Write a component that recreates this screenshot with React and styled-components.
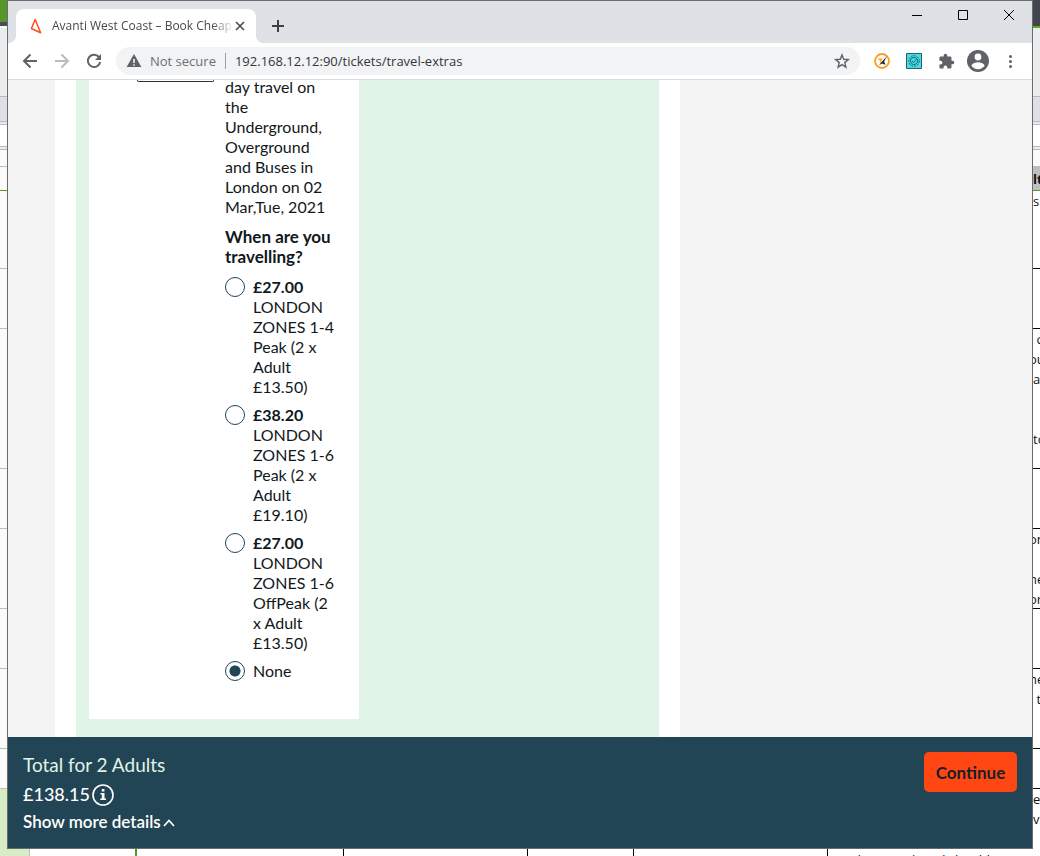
import React, { useState } from "react";
import styled, { createGlobalStyle } from "styled-components";

const Global = createGlobalStyle`
  *, *::before, *::after { box-sizing: border-box; }
  body { margin: 0; background: #fff; color: #111820; }
  button, input { font: inherit; color: inherit; }
  button { border: 0; padding: 0; background: none; cursor: pointer; }
  p, h1, h2, fieldset { margin: 0; }
`;

const ui = `"Open Sans", "Noto Sans", sans-serif`;
const brand = `Lato, "Liberation Sans", sans-serif`;

/* Spreadsheet behind the browser window */
const Desktop = styled.div`
  display: grid;
  grid-template-columns: 7px minmax(0, 1fr) 7px;
  grid-template-rows: minmax(0, 1fr) 7px;
  height: 100vh;
  min-height: 480px;
  overflow: hidden;
`;
const Sheet = styled.div`
  overflow: hidden;
  min-height: 0;
`;
const Band = styled.div`
  height: ${(p) => p.$h}px;
  background: ${(p) => p.$bg || "transparent"};
  border-bottom: ${(p) => (p.$line ? `1px solid ${p.$line}` : "0")};
  padding-top: ${(p) => p.$top || 0}px;
  overflow: hidden;
`;
const CellText = styled.div`
  font: ${(p) => (p.$bold ? 700 : 400)} 13px/20px ${ui};
  height: 20px;
  color: #111;
  white-space: pre;
  text-indent: ${(p) => (p.$cut ? "-4px" : "0")};
`;
const BottomStrip = styled.div`
  grid-column: 1 / -1;
  display: flex;
  overflow: hidden;
`;
const BottomCell = styled.div`
  flex: ${(p) => (p.$w ? `0 0 ${p.$w}px` : "1 1 0")};
  background: ${(p) => p.$bg || "#fff"};
  border-right: ${(p) => p.$line || "0"};
  font: 400 13px/20px ${ui};
  color: #111;
  padding: 1px 0 0 3px;
  white-space: nowrap;
  overflow: hidden;
`;

/* Browser window */
const Window = styled.div`
  display: flex;
  flex-direction: column;
  min-width: 0;
  min-height: 0;
  border: 1px solid #6b6b6b;
  background: #fff;
`;
const TitleBar = styled.header`
  flex: none;
  display: flex;
  height: 42px;
  background: #dee1e6;
  font: 12px/16px ${ui};
`;
const Tab = styled.div`
  position: relative;
  display: flex;
  align-items: center;
  align-self: flex-end;
  width: 240px;
  height: 34px;
  margin-left: 8px;
  padding: 0 10px 0 12px;
  border-radius: 8px 8px 0 0;
  background: #fff;
  &::before, &::after {
    content: "";
    position: absolute;
    bottom: 0;
    width: 8px;
    height: 8px;
  }
  &::before { left: -8px; background: radial-gradient(circle at 0 0, #dee1e6 8px, #fff 8px); }
  &::after { right: -8px; background: radial-gradient(circle at 100% 0, #dee1e6 8px, #fff 8px); }
`;
const TabTitle = styled.span`
  flex: 1;
  margin: 0 0 0 8px;
  overflow: hidden;
  white-space: nowrap;
  color: #45494d;
  mask-image: linear-gradient(to right, #000 88%, transparent);
`;
const IconButton = styled.button`
  flex: none;
  display: grid;
  place-items: center;
  width: ${(p) => p.$w || 32}px;
  height: ${(p) => p.$h || 32}px;
  color: ${(p) => p.$color || "#5f6368"};
`;
const NewTab = styled(IconButton)`
  align-self: flex-end;
  margin-left: 6px;
  padding-bottom: 2px;
`;
const WindowButtons = styled.div`
  display: flex;
  margin-left: auto;
`;
const Toolbar = styled.div`
  flex: none;
  display: flex;
  align-items: center;
  height: 37px;
  padding: 0 6px;
  border-bottom: 1px solid #d9dadc;
  font: 14px/20px ${ui};
`;
const AddressBar = styled.div`
  flex: 1;
  display: flex;
  align-items: center;
  min-width: 0;
  height: 28px;
  margin: 0 6px;
  padding: 0 2px 0 10px;
  border-radius: 14px;
  background: #f1f3f4;
  font: 13px/20px ${ui};
`;
const Security = styled.span`
  margin-left: 8px;
  padding-right: 9px;
  border-right: 1px solid #9aa0a6;
  line-height: 16px;
  color: #6b6f73;
  white-space: nowrap;
`;
const Address = styled.input`
  flex: 1;
  min-width: 0;
  border: 0;
  padding: 0 0 0 9px;
  outline: 0;
  background: none;
  color: #33363a;
`;

/* Ticket page */
const Page = styled.main`
  flex: 1;
  min-height: 0;
  overflow: hidden;
  background: #f4f4f4;
  padding-left: 47px;
`;
const Column = styled.div`
  max-width: 625px;
  height: 100%;
  padding: 0 21px;
  background: #fff;
`;
const Extras = styled.section`
  height: 100%;
  padding: 0 13px;
  background: #e0f4e7;
`;
const Card = styled.article`
  display: flex;
  width: 270px;
  padding: 0 24px 30px 48px;
  background: #fff;
`;
const Thumb = styled.div`
  flex: none;
  width: 77px;
  height: 2px;
  margin-right: 11px;
  border: 1px solid #26333c;
  border-top: 0;
  border-radius: 0 0 4px 4px;
`;
const Details = styled.div`
  min-width: 0;
  font: 16px/20px ${brand};
`;
const Summary = styled.p`
  margin-top: -3px;
`;
const Options = styled.fieldset`
  min-width: 0;
  padding: 0;
  border: 0;
`;
const Question = styled.legend`
  padding: 10px 0;
  font-size: 17px;
  font-weight: 700;
`;
const Option = styled.label`
  display: flex;
  gap: 8px;
  width: 110px;
  margin-bottom: 8px;
`;
const Radio = styled.input`
  appearance: none;
  flex: none;
  width: 20px;
  height: 20px;
  margin: 0;
  border: 1px solid #214554;
  border-radius: 50%;
  background: #fff;
  &:checked { background: radial-gradient(circle, #214554 5px, #fff 6px); }
`;
const Price = styled.strong`
  display: block;
`;

const Basket = styled.footer`
  flex: none;
  display: flex;
  justify-content: space-between;
  align-items: flex-start;
  height: 111px;
  padding: 14px 15px 0;
  background: #214554;
  color: #fff;
  font-family: ${brand};
`;
const Totals = styled.div`
  display: flex;
  flex-direction: column;
  align-items: flex-start;
`;
const TotalLabel = styled.p`
  color: #e0f4e7;
  font-size: 19px;
  line-height: 28px;
`;
const Amount = styled.p`
  display: flex;
  align-items: center;
  gap: 2px;
  font-size: 18px;
  line-height: 30px;
  font-weight: 500;
  svg { margin-top: 2px; }
`;
const MoreDetails = styled.button`
  display: flex;
  align-items: center;
  gap: 2px;
  font-size: 17px;
  line-height: 26px;
  font-weight: 600;
  svg { margin-top: 2px; }
`;
const Continue = styled.button`
  width: 93px;
  height: 40px;
  margin-top: 1px;
  border-radius: 5px;
  background: #ff4713;
  color: #16202a;
  font-size: 17px;
  font-weight: 700;
`;

const leftBands = [
  [22, "#57962b"], [4, "#4a4f57"], [2, "#f5faf2"], [69, "#ebecee", "#b9bac0"],
  [25, "#dfe0e6", "#b9bac0"], [3, "#ebebee", "#b9bac0"], [22, "#fff", "#b9bac0"],
  [3, "#ebebee", "#b9bac0"], [17, "#fafafa", "#bdbdbd"], [24, "#fafafa", "#57962b"],
  [78, "#fafafa", "#bdbdbd"], [60, "#fafafa", "#bdbdbd"], [140, "#fafafa", "#bdbdbd"],
  [60, "#fafafa", "#bdbdbd"], [80, "#fafafa", "#bdbdbd"], [60, "#fafafa", "#bdbdbd"],
  [80, "#fafafa", "#bdbdbd"], [40, "#fafafa", "#bdbdbd"], [60, "#d8edc6"],
];

const rightBands = [
  { h: 26, bg: "#41464e" }, { h: 2, bg: "#5cab2e" }, { h: 69, bg: "#ebecee", line: "#b9bac0" },
  { h: 25, bg: "#dfe0e6", line: "#b9bac0" }, { h: 3, bg: "#ebebee", line: "#b9bac0" },
  { h: 22, line: "#b9bac0" }, { h: 3, bg: "#ebebee", line: "#b9bac0" }, { h: 16, bg: "#fafafa" },
  { h: 25, bg: "#bfbfbf", line: "#57962b", top: 3, text: ["lt"], bold: true },
  { h: 78, line: "#000", text: ["s"] },
  { h: 60, line: "#000" },
  { h: 140, line: "#000", text: [" c", "ou", "at", "", "", "to"] },
  { h: 60, line: "#000" },
  { h: 80, line: "#000", text: ["on", "", "he", "or"] },
  { h: 60, line: "#000" },
  { h: 80, line: "#000", text: ["he", " t"] },
  { h: 40, line: "#000" },
  { h: 60, text: ["e", "vi"] },
];
const cutWords = ["ou", "on", "he", "or"];

const options = [
  { id: "z14", price: "£27.00", text: "LONDON ZONES 1-4 Peak (2 x Adult £13.50)" },
  { id: "z16", price: "£38.20", text: "LONDON ZONES 1-6 Peak (2 x Adult £19.10)" },
  { id: "z16off", price: "£27.00", text: "LONDON ZONES 1-6 OffPeak (2 x Adult £13.50)" },
  { id: "none", text: "None" },
];

const Svg = ({ size = 16, box = 16, children, ...rest }) => (
  <svg width={size} height={size} viewBox={`0 0 ${box} ${box}`} fill="none" aria-hidden="true" {...rest}>
    {children}
  </svg>
);

const Gear = () => (
  <Svg>
    <path fill="#49dbe4" stroke="#23606c" d="M.5.5h15v15H.5z" />
    <circle cx="8" cy="8" r="5.3" stroke="#176a78" strokeDasharray="2 1" />
    <circle cx="8" cy="8" r="3.6" stroke="#176a78" />
    <path d="m6 8 1.500 1.500L10.200 6.500" stroke="#176a78" />
  </Svg>
);

export default function App() {
  const [choice, setChoice] = useState("none");
  return (
    <>
      <Global />
      <Desktop>
        <Sheet>
          {leftBands.map(([h, bg, line], i) => <Band key={i} $h={h} $bg={bg} $line={line} />)}
        </Sheet>
        <Window>
          <TitleBar>
            <Tab>
              <Svg>
                <path d="M7.200 1.500 3.400 10.500l9.200 4.200L7.200 1.500Z" stroke="#ff4b1f" strokeWidth="1.500" strokeLinejoin="round" />
              </Svg>
              <TabTitle>Avanti West Coast – Book Cheap</TabTitle>
              <IconButton $w={12} $h={16} $color="#45494d" aria-label="Close tab">
                <Svg size={10} box={10}><path d="m1 1 8 8M9 1 1 9" stroke="currentColor" strokeWidth="1.6" /></Svg>
              </IconButton>
            </Tab>
            <NewTab $color="#3c4043" aria-label="New tab">
              <Svg size={12} box={12}><path d="M6 0v12M0 6h12" stroke="currentColor" strokeWidth="2" /></Svg>
            </NewTab>
            <WindowButtons>
              <IconButton $w={46} $h={28} $color="#000" aria-label="Minimise">
                <Svg size={10} box={10}><path d="M0 5.500h10" stroke="currentColor" /></Svg>
              </IconButton>
              <IconButton $w={46} $h={28} $color="#000" aria-label="Maximise">
                <Svg size={10} box={10}><path d="M.5.5h9v9h-9z" stroke="currentColor" /></Svg>
              </IconButton>
              <IconButton $w={46} $h={28} $color="#000" aria-label="Close">
                <Svg size={10} box={10}><path d="m0 0 10 10M10 0 0 10" stroke="currentColor" /></Svg>
              </IconButton>
            </WindowButtons>
          </TitleBar>
          <Toolbar>
            <IconButton aria-label="Back">
              <Svg><path d="M15 8H2m6.500-6.500L2 8l6.500 6.500" stroke="currentColor" strokeWidth="2" /></Svg>
            </IconButton>
            <IconButton $color="#b9bbbe" aria-label="Forward">
              <Svg><path d="M1 8h13M7.500 1.500 14 8l-6.500 6.500" stroke="currentColor" strokeWidth="2" /></Svg>
            </IconButton>
            <IconButton aria-label="Reload">
              <Svg>
                <path d="M13.300 4.500A6.200 6.200 0 1 0 14.200 9" stroke="currentColor" strokeWidth="2" />
                <path d="M15 1v6H9l6-6Z" fill="currentColor" />
              </Svg>
            </IconButton>
            <AddressBar>
              <Svg>
                <path fill="#5f6368" fillRule="evenodd" d="M8 1 .6 14h14.800L8 1Zm-.8 5h1.600v4H7.200V6Zm0 5.200h1.600v1.600H7.200v-1.600Z" />
              </Svg>
              <Security>Not secure</Security>
              <Address aria-label="Address" defaultValue="192.168.12.12:90/tickets/travel-extras" />
              <IconButton aria-label="Bookmark this page">
                <Svg><path d="m8 2 1.700 4.300 4.600.3-3.500 3 1.100 4.500L8 11.600l-3.900 2.500 1.100-4.500-3.500-3 4.600-.3L8 2Z" stroke="currentColor" strokeWidth="1.400" /></Svg>
              </IconButton>
            </AddressBar>
            <IconButton aria-label="Script blocker">
              <Svg>
                <circle cx="8" cy="8" r="7" stroke="#f9a01b" strokeWidth="1.800" />
                <path d="M3.500 5.500H9L7 8l2 3-4-2.500L6.500 8l-3-2.500Z" fill="#f9a01b" />
                <path d="m13 3-2.800 5.500 1.300 3.500-3-1.500L5 12l8-9Z" fill="#222" />
              </Svg>
            </IconButton>
            <IconButton aria-label="Settings extension"><Gear /></IconButton>
            <IconButton aria-label="Extensions">
              <Svg size={17} box={24}>
                <path fill="currentColor" d="M20.500 11H19V7c0-1.100-.9-2-2-2h-4V3.500a2.500 2.500 0 0 0-5 0V5H4c-1.100 0-2 .9-2 2v3.800h1.500a2.700 2.700 0 0 1 0 5.400H2V20c0 1.100.9 2 2 2h3.800v-1.500a2.700 2.700 0 0 1 5.400 0V22H17c1.100 0 2-.9 2-2v-4h1.500a2.500 2.500 0 0 0 0-5Z" />
              </Svg>
            </IconButton>
            <IconButton aria-label="Profile">
              <Svg size={22} box={22}>
                <circle cx="11" cy="11" r="11" fill="currentColor" />
                <circle cx="11" cy="7" r="3.400" fill="#fff" />
                <path d="M4.300 15.500c1.200-2.700 4.400-3.300 6.700-3.300s5.500.6 6.700 3.300a8 8 0 0 1-13.400 0Z" fill="#fff" />
              </Svg>
            </IconButton>
            <IconButton aria-label="Menu">
              <Svg>
                <g fill="currentColor"><circle cx="8.500" cy="3.500" r="1.500" /><circle cx="8.500" cy="8.500" r="1.500" /><circle cx="8.500" cy="13.500" r="1.500" /></g>
              </Svg>
            </IconButton>
          </Toolbar>
          <Page>
            <Column>
              <Extras>
                <Card>
                  <Thumb />
                  <Details>
                    <Summary>day travel on the Underground, Overground and Buses in London on 02 Mar,Tue, 2021</Summary>
                    <Options>
                      <Question>When are you travelling?</Question>
                      {options.map((o) => (
                        <Option key={o.id}>
                          <Radio type="radio" name="travelcard" checked={choice === o.id} onChange={() => setChoice(o.id)} />
                          <span>
                            {o.price && <Price>{o.price}</Price>}
                            {o.text}
                          </span>
                        </Option>
                      ))}
                    </Options>
                  </Details>
                </Card>
              </Extras>
            </Column>
          </Page>
          <Basket>
            <Totals>
              <TotalLabel>Total for 2 Adults</TotalLabel>
              <Amount>
                £138.15
                <Svg size={22} box={22}>
                  <circle cx="11" cy="11" r="10" stroke="#fff" strokeWidth="1.600" />
                  <path fill="#fff" d="M9.800 5h2.600v2.500H9.800V5ZM8.500 9h4v5.500H14V16H8.300v-1.500h1.500v-4H8.500V9Z" />
                </Svg>
              </Amount>
              <MoreDetails>
                Show more details
                <Svg size={12} box={12}><path d="m1 9 5-5.500L11 9" stroke="#fff" strokeWidth="1.700" /></Svg>
              </MoreDetails>
            </Totals>
            <Continue>Continue</Continue>
          </Basket>
        </Window>
        <Sheet>
          {rightBands.map((b, i) => (
            <Band key={i} $h={b.h} $bg={b.bg} $line={b.line} $top={b.top}>
              {b.text && b.text.map((t, j) => <CellText key={j} $bold={b.bold} $cut={cutWords.includes(t)}>{t}</CellText>)}
            </Band>
          ))}
        </Sheet>
        <BottomStrip>
          <BottomCell $w={30} $bg="#d8edc6" $line="1px solid #bdbdbd" />
          <BottomCell $w={107} $line="2px solid #57962b" />
          <BottomCell $w={207} $line="1px solid #000" />
          <BottomCell $w={184} $line="1px solid #000" />
          <BottomCell $w={106} $line="1px solid #000" />
          <BottomCell $w={194} $line="1px solid #000" />
          <BottomCell>2 index Travel card should</BottomCell>
        </BottomStrip>
      </Desktop>
    </>
  );
}
